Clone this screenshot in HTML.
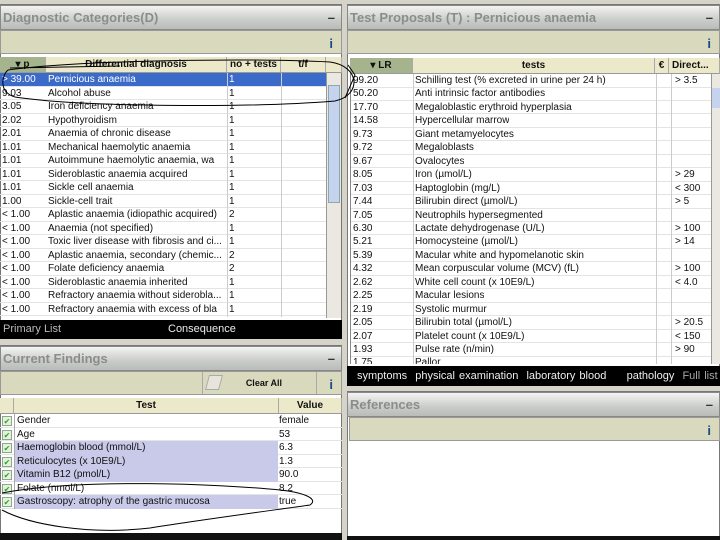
<!DOCTYPE html>
<html><head><meta charset="utf-8"><style>
*{margin:0;padding:0;box-sizing:border-box}
body{width:720px;height:540px;overflow:hidden;background:#d6d3c9;font-family:"Liberation Sans",sans-serif;font-size:10px;color:#111;position:relative}
.a{position:absolute}
.title{background:linear-gradient(#f4f4f2,#c9ccc8 60%,#b9bcb8);color:#8a8d8a;font-size:13px;font-weight:bold;padding-left:2px;line-height:24px;border:1px solid #888}
.title b{position:absolute;right:6px;top:0;color:#333}
.tb{background:#d9d9bd;border:1px solid #999}
.tb i{position:absolute;right:8px;top:5px;color:#1a4b8c;font-weight:bold;font-style:normal;font-size:13px}
.hd{background:#ece9cb;font-weight:bold;text-align:center;line-height:15px;border-right:1px solid #aaa;border-bottom:1px solid #999}
.row{position:absolute;left:0;height:13.5px;line-height:13.5px;white-space:nowrap;border-bottom:1px solid #e4e4e4}
.row span{position:absolute;top:0;overflow:hidden}
.white{background:#fff}
.black{background:#000;color:#eee;font-size:11px;line-height:18px}
.sb{background:#eae8e0;border-left:1px solid #999}
.lav{background:#c9c9ea}
</style></head><body>
<div class="a white" style="left:0;top:4px;width:342px;height:334px;border:1px solid #777"></div>
<div class="a title" style="left:0;top:5px;width:342px;height:25px">Diagnostic Categories(D)<b>–</b></div>
<div class="a tb" style="left:0;top:30px;width:342px;height:24px"><i>i</i></div>
<div class="a hd" style="left:0;top:57px;width:46px;height:16px;background:#a6b48e">▾ p</div>
<div class="a hd" style="left:46px;top:57px;width:181px;height:16px">Differential diagnosis</div>
<div class="a hd" style="left:227px;top:57px;width:54px;height:16px">no + tests</div>
<div class="a hd" style="left:281px;top:57px;width:45px;height:16px">t/f</div>
<div class="a hd" style="left:326px;top:57px;width:16px;height:16px"></div>
<div class="a" style="left:0;top:73px;width:326px;height:245px" id="lt"></div>
<div class="a sb" style="left:326px;top:73px;width:15px;height:245px"><div style="position:absolute;left:1px;top:12px;width:12px;height:118px;background:#c5d3ee;border:1px solid #8aa"></div></div>
<div class="a black" style="left:0;top:320px;width:342px;height:19px"><span style="position:absolute;left:3px;color:#bbb">Primary List</span><span style="position:absolute;left:168px">Consequence</span></div>

<div class="a white" style="left:0;top:345px;width:342px;height:190px;border:1px solid #777"></div>
<div class="a title" style="left:0;top:346px;width:342px;height:25px">Current Findings<b>–</b></div>
<div class="a tb" style="left:0;top:371px;width:342px;height:24px"><div style="position:absolute;left:201px;top:0;width:115px;height:22px;border-left:1px solid #aaa;border-right:1px solid #aaa;font-weight:bold;line-height:22px;text-align:right;padding-right:34px;font-size:9px">Clear All</div><div style="position:absolute;left:206px;top:3px;width:14px;height:15px;background:#e8e4dc;transform:skewX(-15deg);border:1px solid #aaa"></div><i>i</i></div>
<div class="a hd" style="left:0;top:398px;width:14px;height:16px"></div>
<div class="a hd" style="left:14px;top:398px;width:265px;height:16px">Test</div>
<div class="a hd" style="left:279px;top:398px;width:63px;height:16px">Value</div>
<div class="a" style="left:0;top:414px;width:342px;height:100px" id="fd"></div>
<div class="a" style="left:0;top:533px;width:342px;height:7px;background:#111"></div>

<div class="a white" style="left:347px;top:4px;width:373px;height:382px;border:1px solid #777"></div>
<div class="a title" style="left:347px;top:5px;width:373px;height:25px">Test Proposals (T) : Pernicious anaemia<b>–</b></div>
<div class="a tb" style="left:347px;top:30px;width:373px;height:24px"><i>i</i></div>
<div class="a hd" style="left:350px;top:58px;width:63px;height:16px;background:#a6b48e">▾ LR</div>
<div class="a hd" style="left:413px;top:58px;width:242px;height:16px">tests</div>
<div class="a hd" style="left:655px;top:58px;width:14px;height:16px">€</div>
<div class="a hd" style="left:669px;top:58px;width:51px;height:16px;text-align:left;padding-left:3px">Direct...</div>
<div class="a" style="left:350px;top:74px;width:361px;height:290px;overflow:hidden;border-left:1px solid #888" id="rt"></div>
<div class="a sb" style="left:711px;top:74px;width:9px;height:290px"><div style="position:absolute;left:0;top:14px;width:9px;height:20px;background:#c5d3ee"></div></div>
<div class="a black" style="left:347px;top:366px;width:373px;height:20px;font-size:11px;line-height:20px;word-spacing:1px"><span style="position:absolute;left:10px;white-space:nowrap">symptoms&nbsp; physical examination&nbsp; laboratory blood&nbsp;&nbsp;&nbsp;&nbsp; pathology&nbsp; <span style="color:#aaa">Full list</span></span></div>

<div class="a white" style="left:347px;top:391px;width:373px;height:149px;border:1px solid #777"></div>
<div class="a title" style="left:347px;top:392px;width:373px;height:25px">References<b>–</b></div>
<div class="a tb" style="left:349px;top:417px;width:371px;height:24px"><i>i</i></div>
<div class="a" style="left:347px;top:536px;width:373px;height:4px;background:#111"></div>

<svg class="a" style="left:0;top:0" width="720" height="540" fill="none" stroke="#000" stroke-width="1">
<path d="M8 70 C80 60 250 58 330 62 C360 66 362 95 335 101 C250 108 80 107 15 97 C-2 92 2 75 8 70"/>
<path d="M345 98 L355 75 L348 65 M10 68 L120 66"/>
<path d="M2 493 C80 478 220 484 280 490 C300 492 320 498 310 505 C260 512 200 520 150 528 C90 535 30 525 2 510"/>
</svg>

<script>
var L=[["> 39.00","Pernicious anaemia","1"],["9.03","Alcohol abuse","1"],["3.05","Iron deficiency anaemia","1"],["2.02","Hypothyroidism","1"],["2.01","Anaemia of chronic disease","1"],["1.01","Mechanical haemolytic anaemia","1"],["1.01","Autoimmune haemolytic anaemia, wa","1"],["1.01","Sideroblastic anaemia acquired","1"],["1.01","Sickle cell anaemia","1"],["1.00","Sickle-cell trait","1"],["< 1.00","Aplastic anaemia (idiopathic acquired)","2"],["< 1.00","Anaemia (not specified)","1"],["< 1.00","Toxic liver disease with fibrosis and ci...","1"],["< 1.00","Aplastic anaemia, secondary (chemic...","2"],["< 1.00","Folate deficiency anaemia","2"],["< 1.00","Sideroblastic anaemia inherited","1"],["< 1.00","Refractory anaemia without siderobla...","1"],["< 1.00","Refractory anaemia with excess of bla","1"]];
var h="";L.forEach(function(r,i){var s=i==0?"background:#3a6bc8;color:#fff;":"";h+='<div class="row" style="top:'+(i*13.5)+'px;width:326px;'+s+'"><span style="left:2px">'+r[0]+'</span><span style="left:48px;width:178px">'+r[1]+'</span><span style="left:229px">'+r[2]+'</span><span style="left:227px;top:0;height:14px;border-left:1px solid #ccc"></span><span style="left:281px;height:14px;border-left:1px solid #ccc"></span></div>';});
document.getElementById("lt").innerHTML=h;
var R=[["99.20","Schilling test (% excreted in urine per 24 h)","> 3.5"],["50.20","Anti intrinsic factor antibodies",""],["17.70","Megaloblastic erythroid hyperplasia",""],["14.58","Hypercellular marrow",""],["9.73","Giant metamyelocytes",""],["9.72","Megaloblasts",""],["9.67","Ovalocytes",""],["8.05","Iron (µmol/L)","> 29"],["7.03","Haptoglobin (mg/L)","< 300"],["7.44","Bilirubin direct (µmol/L)","> 5"],["7.05","Neutrophils hypersegmented",""],["6.30","Lactate dehydrogenase (U/L)","> 100"],["5.21","Homocysteine (µmol/L)","> 14"],["5.39","Macular white and hypomelanotic skin",""],["4.32","Mean corpuscular volume (MCV) (fL)","> 100"],["2.62","White cell count (x 10E9/L)","< 4.0"],["2.25","Macular lesions",""],["2.19","Systolic murmur",""],["2.05","Bilirubin total (µmol/L)","> 20.5"],["2.07","Platelet count (x 10E9/L)","< 150"],["1.93","Pulse rate (n/min)","> 90"],["1.75","Pallor",""]];
h="";R.forEach(function(r,i){h+='<div class="row" style="top:'+(i*13.45)+'px;width:361px"><span style="left:2px">'+r[0]+'</span><span style="left:64px">'+r[1]+'</span><span style="left:305px;height:14px;border-left:1px solid #ccc"></span><span style="left:320px;height:14px;border-left:1px solid #ccc;padding-left:3px">'+r[2]+'</span><span style="left:62px;height:14px;border-left:1px solid #ccc"></span></div>';});
document.getElementById("rt").innerHTML=h;
var F=[["Gender","female",0],["Age","53",0],["Haemoglobin blood (mmol/L)","6.3",1],["Reticulocytes (x 10E9/L)","1.3",1],["Vitamin B12 (pmol/L)","90.0",1],["Folate (nmol/L)","8.2",0],["Gastroscopy: atrophy of the gastric mucosa","true",1]];
h="";F.forEach(function(r,i){h+='<div class="row" style="top:'+(i*13.5)+'px;width:342px"><span style="left:2px;top:2px;width:10px;height:10px;background:#e6f0dc;border:1px solid #8a8;color:#2a2;font-size:8px;line-height:9px;text-align:center">✔</span><span class="'+(r[2]?'lav':'')+'" style="left:14px;width:264px;padding-left:2px;border-left:1px solid #aaa">'+r[0]+'</span><span style="left:279px">'+r[1]+'</span></div>';});
document.getElementById("fd").innerHTML=h;
</script>
</body></html>
